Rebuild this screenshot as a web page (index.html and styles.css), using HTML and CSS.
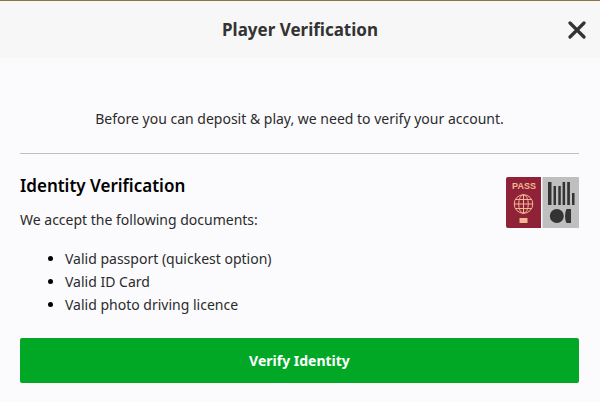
FILE: index.html
```html
<!DOCTYPE html>
<html lang="en">

<head>
    <meta charset="UTF-8">
    <meta name="viewport" content="width=device-width, initial-scale=1.0">
    <title>Player Verification</title>
    <link rel="stylesheet" href="styles.css">
</head>

<body>
    <div class="modal">
        <header class="modal-header">
            <h1>Player Verification</h1>
            <button type="button" class="close-btn" aria-label="Close">
                <svg width="18" height="18" viewBox="0 0 18 18" aria-hidden="true">
                    <path d="M2 2L16 16M16 2L2 16" stroke="#333" stroke-width="3.2" stroke-linecap="round" />
                </svg>
            </button>
        </header>

        <main class="modal-body">
            <p class="intro">Before you can deposit &amp; play, we need to verify your account.</p>

            <section class="identity">
                <div class="identity-text">
                    <h2>Identity Verification</h2>
                    <p>We accept the following documents:</p>
                    <ul class="documents">
                        <li>Valid passport (quickest option)</li>
                        <li>Valid ID Card</li>
                        <li>Valid photo driving licence</li>
                    </ul>
                </div>
                <svg class="passport" width="74" height="51" viewBox="0 0 74 51" aria-hidden="true">
                    <path d="M3 0H36V51H3Q1 51 1 49V2Q1 0 3 0Z" fill="#8f2236" />
                    <path d="M37.500 0H73Q74 0 74 1V50Q74 51 73 51H37.500Z" fill="#bfbfbf" />
                    <text class="passport-label" x="19" y="12" text-anchor="middle">PASS</text>
                    <g fill="none" stroke="#f2b795" stroke-width="1">
                        <circle cx="18.500" cy="27" r="9.3" />
                        <ellipse cx="18.500" cy="27" rx="4.8" ry="9.3" />
                        <path d="M18.500 17.5V36.5M9 27H28M10.500 22.500H26.500M10.500 31.500H26.500" />
                    </g>
                    <rect x="14.500" y="41" width="8" height="5" fill="#f2b795" />
                    <g fill="#333">
                        <rect x="43" y="5" width="3.5" height="23" />
                        <rect x="48.500" y="9" width="2.5" height="19" />
                        <rect x="53.300" y="9" width="2.5" height="19" />
                        <rect x="57.600" y="5" width="2.5" height="23" />
                        <rect x="62.200" y="5" width="2.7" height="23" />
                        <rect x="67" y="16" width="2.500" height="12" />
                        <circle cx="51.800" cy="39" r="7" />
                        <path d="M61.500 32H66V46H61.500Q60 43 60 39Q60 35 61.500 32Z" />
                    </g>
                </svg>
            </section>

            <button type="button" class="verify-btn">Verify Identity</button>
        </main>
    </div>
</body>

</html>
```
FILE: styles.css
```css
* {
    margin: 0;
    padding: 0;
    box-sizing: border-box;
}

body {
    background: #fbfbfd;
    color: #2b2b2b;
    font-family: "Noto Sans", sans-serif;
    font-size: 14px;
    line-height: 23px;
}

.modal {
    min-height: 100vh;
    border-top: 1px solid #8d7443;
}

.modal-header {
    display: grid;
    grid-template-columns: 1fr auto 1fr;
    align-items: center;
    padding: 16px 12px;
    background: #f7f7f7;
}

.modal-header h1 {
    grid-column: 2;
    font-size: 17px;
    line-height: 25px;
    color: #333;
}

.close-btn {
    display: flex;
    justify-self: end;
    padding: 2px;
    border: none;
    background: none;
    cursor: pointer;
}

.modal-body {
    padding: 49px 21px 18px 20px;
}

.intro {
    padding-bottom: 23px;
    border-bottom: 1px solid #bfbfbf;
    text-align: center;
}

.identity {
    display: flex;
    justify-content: space-between;
    align-items: flex-start;
    padding-top: 20px;
}

.identity h2 {
    margin-bottom: 11px;
    font-size: 17px;
    font-weight: 600;
    color: #000;
}

.documents {
    margin: 16px 0 22px;
    padding-left: 45px;
}

.documents li::marker {
    color: #000;
}

.passport {
    flex: none;
    margin-top: 3px;
}

.passport-label {
    font: bold 9px "Liberation Sans", sans-serif;
    fill: #f2b795;
}

.verify-btn {
    display: block;
    width: 100%;
    padding: 11px;
    border: none;
    border-radius: 2px;
    background: #00a826;
    color: #fff;
    font: bold 14px/23px "Noto Sans", sans-serif;
    cursor: pointer;
}
```
